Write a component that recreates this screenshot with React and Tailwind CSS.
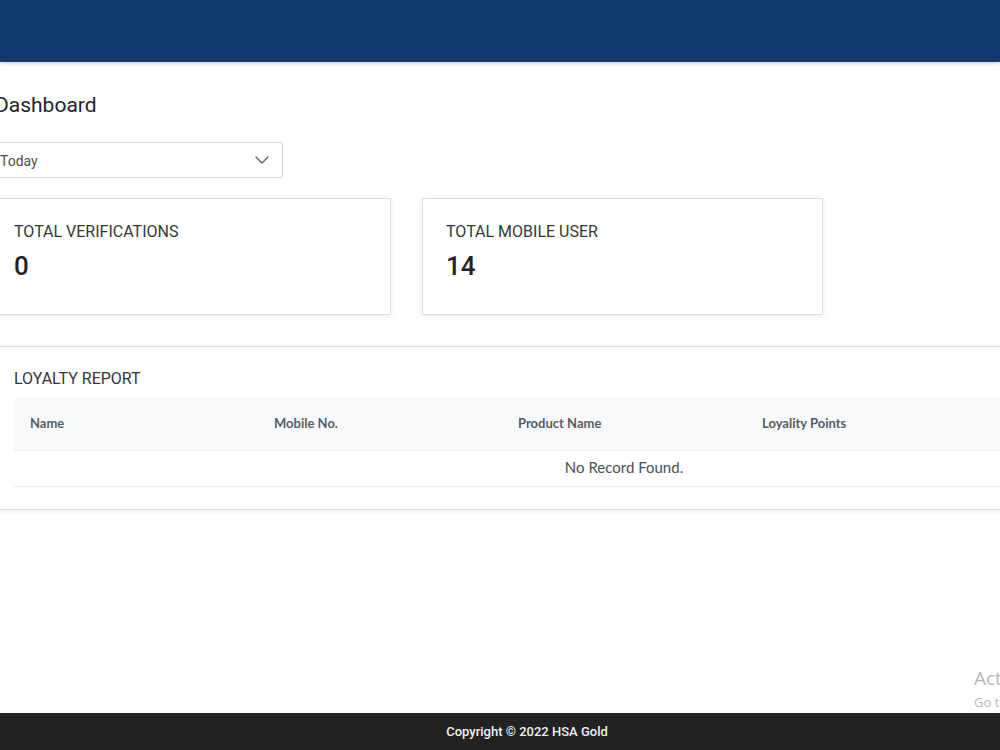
import React, { useState } from 'react';
import { ChevronDown } from 'lucide-react';

const columns = ['Name', 'Mobile No.', 'Product Name', 'Loyality Points', 'Date'];

function StatCard({ title, value }) {
  return (
    <div className="w-[401px] h-[117px] bg-white border border-[#d9dce1] shadow-[0_1px_6px_rgba(0,0,0,0.08)] px-[23px] pt-[21px]">
      <div className="text-[16px] leading-6 text-[#33373b] uppercase">{title}</div>
      <div className="mt-[6px] text-[26px] leading-8 font-medium text-[#1f2226]">{value}</div>
    </div>
  );
}

export default function App() {
  const [range, setRange] = useState('Today');

  return (
    <div className="relative min-h-screen flex flex-col bg-white overflow-hidden font-['Roboto',sans-serif]">
      {/* Top bar */}
      <header className="h-[62px] bg-[#133a6e] shadow-[0_2px_4px_rgba(0,0,0,0.15)] shrink-0" />

      <main className="flex-1 -ml-[10px] w-[1260px] pt-[28px]">
        <h1 className="pl-[5px] text-[21px] leading-[30px] text-[#212529]">Dashboard</h1>

        {/* Period filter */}
        <div className="relative mt-[22px] w-[293px] h-[36px]">
          <select
            value={range}
            onChange={e => setRange(e.target.value)}
            className="appearance-none w-full h-full bg-white border border-[#d5d8dc] rounded-[2px] pl-[9px] pt-[2px] text-[14px] text-[#495057] outline-none"
          >
            <option>Today</option>
            <option>This Week</option>
            <option>This Month</option>
          </select>
          <ChevronDown className="absolute right-[9px] top-[6px] h-[24px] w-[24px] text-[#5a6067] pointer-events-none" strokeWidth={1.4} />
        </div>

        <div className="mt-[20px] flex gap-[31px]">
          <StatCard title="Total Verifications" value="0" />
          <StatCard title="Total Mobile User" value="14" />
        </div>

        {/* Loyalty report */}
        <section className="mt-[31px] w-[1250px] bg-white border border-[#d9dce1] shadow-[0_1px_6px_rgba(0,0,0,0.08)] px-[23px] pt-[20px] pb-[22px]">
          <h2 className="text-[16px] leading-6 text-[#33373b] uppercase">Loyalty Report</h2>
          <table className="mt-[6px] w-[1220px] table-fixed border-collapse font-['Lato',sans-serif]">
            <thead>
              <tr className="bg-[#f8f9fa] h-[53px]">
                {columns.map(col => (
                  <th key={col} className="w-[244px] pl-[16px] text-left text-[13px] font-bold text-[#575d63]">
                    {col}
                  </th>
                ))}
              </tr>
            </thead>
            <tbody>
              <tr className="h-[36px] border-t border-b border-[#e9ecef]">
                <td colSpan={columns.length} className="text-center text-[15px] text-[#495057] pb-[1px]">
                  No Record Found.
                </td>
              </tr>
            </tbody>
          </table>
        </section>
      </main>

      <footer className="h-[37px] shrink-0 bg-[#222222] flex items-center justify-center pl-[54px]">
        <span className="text-[13px] font-medium text-[#f1f1f1]">Copyright © 2022 HSA Gold</span>
      </footer>

      {/* OS activation watermark */}
      <div className="absolute left-[974px] top-[666px] pointer-events-none font-['Open_Sans',sans-serif] text-[#b8b8b8] whitespace-nowrap">
        <div className="text-[19px] leading-6">Activate Windows</div>
        <div className="text-[13px] leading-5 mt-[2px]">Go to Settings to activate Windows.</div>
      </div>
    </div>
  );
}
